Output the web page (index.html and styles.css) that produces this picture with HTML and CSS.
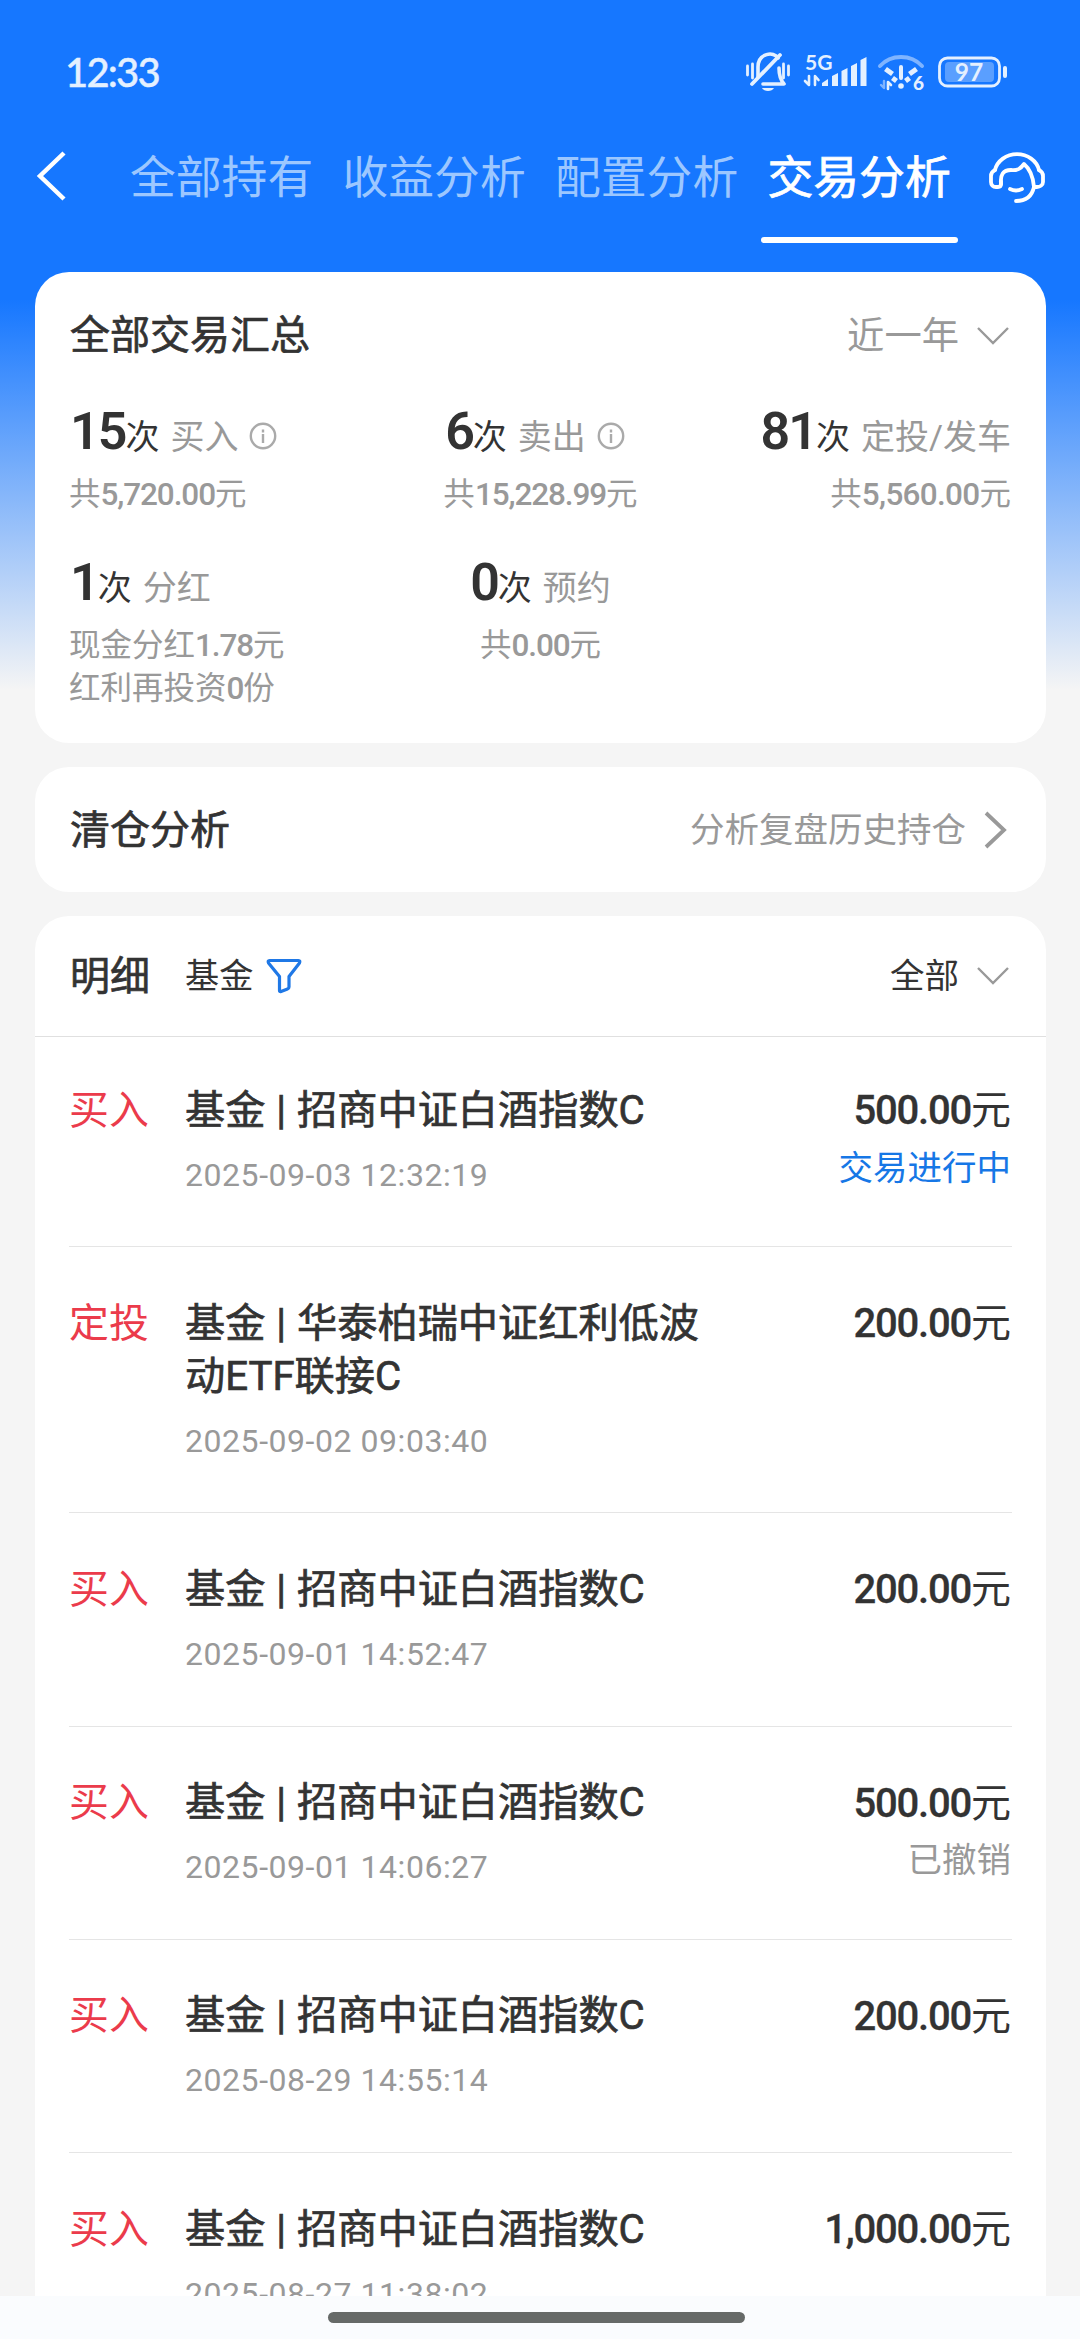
FILE: index.html
```
<!DOCTYPE html>
<html lang="zh-CN">
<head>
<meta charset="utf-8">
<title>交易分析</title>
<link rel="stylesheet" href="styles.css">
</head>
<body>
<div class="screen">
  <header class="statusbar">
    <span class="clock">12:33</span>
    <svg class="status-icons" width="264" height="44" viewBox="744 50 264 44" fill="none" stroke="#e4f0ff" stroke-linecap="round" stroke-linejoin="round">
      <path d="M747.500 66v9M752.500 64v14M783.500 64v14M788.500 66v9" stroke-width="2.800"/>
      <path d="M758 77V67c0-14 16-16 20-9M779 68c0 8 1.500 12 5 16h-21" stroke-width="3.600"/>
      <path d="M752 84L780 55" stroke-width="3.800"/>
      <path d="M762 88h12c-2 4-10 4-12 0z" fill="#e4f0ff" stroke="none"/>
      <text class="net" x="805" y="70">5G</text>
      <path d="M809 76v9l-4-4M815 85v-9l3.500 4" stroke-width="2.600"/>
      <g fill="#e4f0ff" stroke="none">
        <path d="M822 86v-3l6-4v7z"/>
        <path d="M832 86V76l6-3v13zM841.500 86V71l6-3v18zM851 86V66l6-3v23zM860.500 86V60l6-3v29z"/>
      </g>
      <path d="M880 66c11-12 31-12 42 0" stroke="#7fb4ff" stroke-width="4"/>
      <path d="M885.500 72l7-5M892.500 67" stroke="none"/>
      <path d="M886 72l8-6M916 72l-8-6M892 82l5-4M910 82l-5-4" stroke="none"/>
      <path d="M885.500 69l7 5M916.500 69l-7 5M892.500 78l4 3M909.500 78l-4 3" stroke-width="5" stroke-linecap="butt"/>
      <path d="M901 67v11" stroke-width="4"/>
      <circle cx="901" cy="86" r="2.800" fill="#e4f0ff" stroke="none"/>
      <path d="M884 81v7l-3-3" stroke="#7fb4ff" stroke-width="2.400"/>
      <path d="M888 89v-7l3 3" stroke-width="2.600"/>
      <text class="gen" x="913" y="90">6</text>
      <rect x="939.500" y="58" width="60" height="28" rx="8" stroke-width="2.800"/>
      <rect x="945" y="62" width="49" height="20" rx="4" fill="#5a9fff" stroke="none"/>
      <text class="level" x="969" y="81" text-anchor="middle">97</text>
      <path d="M1005 68v8" stroke-width="4"/>
    </svg>
  </header>

  <nav class="navbar">
    <svg class="back" width="32" height="50" viewBox="0 0 32 50" fill="none" stroke="#fff" stroke-width="4.500"><path d="M29 2L5 25l24 23"/></svg>
    <div class="tabs">
      <a class="tab">全部持有</a>
      <a class="tab">收益分析</a>
      <a class="tab">配置分析</a>
      <a class="tab active">交易分析</a>
    </div>
    <svg class="service" width="58" height="54" viewBox="988 151 58 54" fill="none" stroke="#fff" stroke-width="3.800" stroke-linecap="round" stroke-linejoin="round">
      <path d="M995 170a22.500 20 0 0 1 44 0"/>
      <path d="M1001 184c-1-9 2-14 10-14 7 1 10-2 13-6 6 5 9 11 10 23"/>
      <path d="M1001 181v3c0 2-1 3-3 3h-2c-3 0-5-2-5-5v-6c0-3 2-5 4-6M1034 187h3c3 0 6-2 6-5v-6c0-3-2-5-4-6M1034 187c-2 9-7 14-18 14"/>
      <path d="M1010 189c4 2 8 2 12 0"/>
    </svg>
  </nav>

  <main class="content">
    <section class="card summary">
      <div class="card-head">
        <h2>全部交易汇总</h2>
        <div class="range">近一年<svg class="chev" width="34" height="20" viewBox="0 0 34 20"><path d="M2 2l15 15L32 2"/></svg></div>
      </div>
      <div class="stats">
        <div class="stat left">
          <p class="count"><b>15</b><i>次</i><span>买入</span><svg class="info" width="28" height="28" viewBox="0 0 28 28"><circle cx="14" cy="14" r="12.200"/><path d="M14 12v9M14 7.500v3"/></svg></p>
          <p class="sum">共<em>5,720.00</em>元</p>
        </div>
        <div class="stat mid">
          <p class="count"><b>6</b><i>次</i><span>卖出</span><svg class="info" width="28" height="28" viewBox="0 0 28 28"><circle cx="14" cy="14" r="12.200"/><path d="M14 12v9M14 7.500v3"/></svg></p>
          <p class="sum">共<em>15,228.99</em>元</p>
        </div>
        <div class="stat right">
          <p class="count"><b>81</b><i>次</i><span>定投/发车</span></p>
          <p class="sum">共<em>5,560.00</em>元</p>
        </div>
        <div class="stat left">
          <p class="count"><b>1</b><i>次</i><span>分红</span></p>
          <p class="sum">现金分红<em>1.78</em>元</p>
          <p class="sum">红利再投资<em>0</em>份</p>
        </div>
        <div class="stat mid">
          <p class="count"><b>0</b><i>次</i><span>预约</span></p>
          <p class="sum">共<em>0.00</em>元</p>
        </div>
      </div>
    </section>

    <section class="card cleared">
      <h2>清仓分析</h2>
      <div class="more"><span>分析复盘历史持仓</span><svg width="26" height="38" viewBox="0 0 26 38" fill="none" stroke="#999" stroke-width="3.800"><path d="M2 2l18 17L2 36"/></svg></div>
    </section>

    <section class="card details">
      <div class="details-head">
        <h2>明细</h2>
        <div class="kind"><span>基金</span><svg width="36" height="36" viewBox="0 0 36 36" fill="none" stroke="#1f78e6" stroke-width="3.200" stroke-linejoin="round"><path d="M3.500 2.500h29q2 0 1 2.500L23 18.500V29q0 1.500-1.500 2L15 33.500q-1.500.5-1.500-1V18.500L2.500 5q-1-2.500 1-2.500z"/></svg></div>
        <div class="scope"><span>全部</span><svg class="chev" width="34" height="20" viewBox="0 0 34 20"><path d="M2 2l15 15L32 2"/></svg></div>
      </div>
      <ul class="list">
        <li><span class="type">买入</span><div class="info-col"><h3>基金 | 招商中证白酒指数C</h3><time>2025-09-03 12:32:19</time></div><div class="amount"><p><em>500.00</em>元</p><small class="pending">交易进行中</small></div></li>
        <li><span class="type">定投</span><div class="info-col"><h3>基金 | 华泰柏瑞中证红利低波动ETF联接C</h3><time>2025-09-02 09:03:40</time></div><div class="amount"><p><em>200.00</em>元</p></div></li>
        <li><span class="type">买入</span><div class="info-col"><h3>基金 | 招商中证白酒指数C</h3><time>2025-09-01 14:52:47</time></div><div class="amount"><p><em>200.00</em>元</p></div></li>
        <li><span class="type">买入</span><div class="info-col"><h3>基金 | 招商中证白酒指数C</h3><time>2025-09-01 14:06:27</time></div><div class="amount"><p><em>500.00</em>元</p><small>已撤销</small></div></li>
        <li><span class="type">买入</span><div class="info-col"><h3>基金 | 招商中证白酒指数C</h3><time>2025-08-29 14:55:14</time></div><div class="amount"><p><em>200.00</em>元</p></div></li>
        <li><span class="type">买入</span><div class="info-col"><h3>基金 | 招商中证白酒指数C</h3><time>2025-08-27 11:38:02</time></div><div class="amount"><p><em>1,000.00</em>元</p></div></li>
      </ul>
    </section>
  </main>
  <footer class="gesture"><span></span></footer>
</div>
</body>
</html>
```
FILE: styles.css
```
* { box-sizing: border-box; margin: 0; padding: 0; }
body { font-family: Roboto, "Noto Sans CJK SC", sans-serif; color: #333; }
em, i { font-style: normal; }
svg { display: block; flex: none; }
h2 { font-size: 40px; font-weight: 400; line-height: 54px; padding-top: 2px; -webkit-text-stroke: .7px currentColor; }

.screen {
  width: 1080px; height: 2339px; overflow: hidden;
  display: flex; flex-direction: column;
  background: linear-gradient(#1677ff 300px, #f5f5f5 690px);
}

.statusbar { height: 116px; padding: 50px 72px 0 65px; display: flex; justify-content: space-between; flex: none; }
.clock { font: 500 40px/44px Lato, sans-serif; color: #e4f0ff; letter-spacing: -1.800px; -webkit-text-stroke: .4px currentColor; }
.status-icons { overflow: visible; }
.status-icons text { fill: #e4f0ff; stroke: none; font-family: Lato, sans-serif; font-weight: 700; }
.status-icons .net { font-size: 21px; }
.status-icons .gen { font-size: 19px; font-weight: 900; }
.status-icons .level { font-size: 24.500px; }

.navbar { height: 156px; flex: none; display: flex; padding-left: 35px; }
.back { margin-top: 35px; }
.tabs { display: flex; gap: 28px; margin-left: 63px; }
.tab { position: relative; font-size: 45.800px; line-height: 60px; padding-top: 33px; color: #9cc7ff; height: 127px; width: 184.500px; white-space: nowrap; }
.tab.active { color: #fff; -webkit-text-stroke: .8px currentColor; }
.tab.active::after { content: ""; position: absolute; left: -7px; right: -6px; bottom: 0; height: 6px; border-radius: 3px; background: #fff; }
.service { margin: 35px 0 0 36px; }

.content { flex: 1; min-height: 0; overflow: hidden; padding: 0 34px 0 35px; }
.card { background: #fff; border-radius: 34px; }

.summary { height: 471px; padding: 36px 35px 0; }
.card-head { display: flex; justify-content: space-between; align-items: center; height: 54px; }
.range, .scope { display: flex; align-items: center; gap: 17px; }
.range { font-size: 37.300px; line-height: 48px; color: #999; height: 48px; margin-top: 2px; }
.chev { fill: none; stroke: #999; stroke-width: 2.400; margin-right: 1px; }
.stats { display: grid; grid-template-columns: repeat(3, 1fr); row-gap: 39px; padding-top: 42px; }
.stat { display: flex; flex-direction: column; }
.mid { align-items: center; }
.right { align-items: flex-end; }
.count { display: flex; align-items: baseline; height: 69px; line-height: 56px; white-space: nowrap; }
.count b { font-size: 52px; font-weight: 600; letter-spacing: -2px; }
.count i, .count span { font-size: 34px; }
.count span { color: #999; margin-left: 11px; }
.info { align-self: flex-start; margin: 18px 11px 0 11px; fill: none; stroke: #aaa; stroke-width: 2.400; }
.sum { font-size: 31.500px; line-height: 43px; color: #999; white-space: nowrap; }
.sum em { font-weight: 500; letter-spacing: -1.100px; }
.left .sum { margin-left: -1px; }
.right .sum em { letter-spacing: -.7px; }

.cleared { height: 125px; margin-top: 24px; padding: 0 35px; display: flex; align-items: center; justify-content: space-between; }
.more { display: flex; align-items: center; gap: 18px; font-size: 34.500px; color: #999; }
.more svg { margin-right: 1px; }
.more span, .kind span, .scope span { line-height: 46px; }

.details { height: 1600px; margin-top: 24px; }
.details-head { height: 121px; border-bottom: 1px solid #e0e0e0; padding: 0 35px; display: flex; align-items: center; }
.kind { display: flex; align-items: center; gap: 13px; font-size: 34.200px; margin-left: 35px; }
.scope { margin-left: auto; font-size: 34.500px; }

.list { list-style: none; padding: 0 34px; margin-top: -3px; }
.list li { display: flex; padding: 49.500px 1px 0 0; min-height: 213.300px; border-bottom: 1px solid #e5e5e5; }
.type { width: 116px; font-size: 39.900px; line-height: 53px; color: #eb3b4b; }
.info-col { width: 530px; padding-bottom: 51.500px; }
.info-col h3 { font-size: 40.200px; line-height: 53px; font-weight: 400; word-spacing: 1px; -webkit-text-stroke: .7px currentColor; }
.info-col time { display: block; font-size: 32px; line-height: 40px; margin-top: 18px; color: #999; letter-spacing: .55px; }
.amount { margin-left: auto; text-align: right; }
.amount p { font-size: 40px; line-height: 53px; padding-top: .5px; }
.amount em { font-weight: 500; letter-spacing: -1.200px; -webkit-text-stroke: .3px currentColor; }
.amount small { display: block; font-size: 34.500px; line-height: 48px; margin-top: 6.500px; color: #999; }
.amount .pending { color: #1677e6; }

.gesture { height: 43px; flex: none; background: #fafcfe; display: flex; justify-content: center; padding: 16px 7px 0 0; }
.gesture span { width: 417px; height: 11px; border-radius: 6px; background: #666a68; }
```
